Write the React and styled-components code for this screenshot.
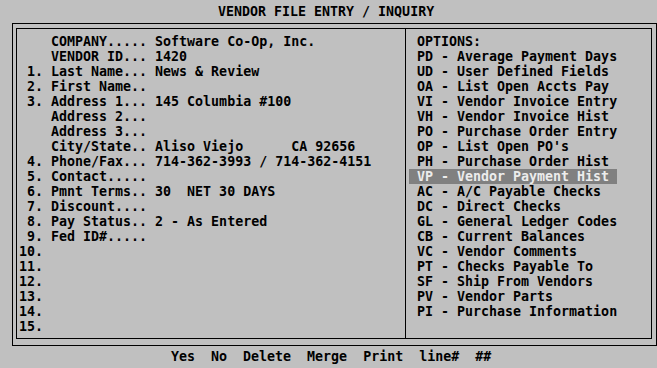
import React from 'react';
import styled, { createGlobalStyle } from 'styled-components';

const Global = createGlobalStyle`
  html, body { margin: 0; padding: 0; background: #c0c0c0; }
  body {
    font-family: "DejaVu Sans Mono", "Liberation Mono", monospace;
    font-weight: bold;
    font-size: 13.3px;
    line-height: 15px;
    color: #000;
  }
`;

const Screen = styled.div`
  width: 657px;
  height: 368px;
  display: flex;
  flex-direction: column;
  background: #c0c0c0;
  overflow: hidden;
`;

const Title = styled.div`
  padding: 4px 0 0 218px;
  height: 15px;
  white-space: pre;
`;

const OuterFrame = styled.div`
  margin: 4px 0 0 12px;
  width: 636px;
  border: 1px solid #000;
  padding: 4px 4px 6px 3px;
`;

const InnerFrame = styled.div`
  border: 1px solid #000;
  height: 309px;
  display: grid;
  grid-template-columns: 389px 1fr;
`;

const FieldPanel = styled.div`
  border-right: 1px solid #000;
  padding: 5px 0 0 2px;
`;

const Field = styled.div`
  display: flex;
  height: 15px;
  white-space: pre;
`;

const Num = styled.span`
  width: 3ch;
  margin-right: 1ch;
  text-align: right;
`;

const Label = styled.span`
  width: 13ch;
`;

const Value = styled.span``;

const OptionPanel = styled.div`
  padding: 5px 0 0 3px;
`;

const Option = styled.div`
  height: 15px;
  width: fit-content;
  padding: 0 8px 0 8px;
  white-space: pre;
  background: ${p => (p.$active ? '#808080' : 'transparent')};
  color: ${p => (p.$active ? '#ececec' : '#000')};
`;

const Footer = styled.div`
  padding: 3px 0 0 171px;
  white-space: pre;
`;

const fields = [
  ['', 'COMPANY.....', 'Software Co-Op, Inc.'],
  ['', 'VENDOR ID...', '1420'],
  ['1.', 'Last Name...', 'News & Review'],
  ['2.', 'First Name..', ''],
  ['3.', 'Address 1...', '145 Columbia #100'],
  ['', 'Address 2...', ''],
  ['', 'Address 3...', ''],
  ['', 'City/State..', 'Aliso Viejo      CA 92656'],
  ['4.', 'Phone/Fax...', '714-362-3993 / 714-362-4151'],
  ['5.', 'Contact.....', ''],
  ['6.', 'Pmnt Terms..', '30  NET 30 DAYS'],
  ['7.', 'Discount....', ''],
  ['8.', 'Pay Status..', '2 - As Entered'],
  ['9.', 'Fed ID#.....', ''],
  ['10.', '', ''],
  ['11.', '', ''],
  ['12.', '', ''],
  ['13.', '', ''],
  ['14.', '', ''],
  ['15.', '', ''],
];

const options = [
  ['PD', 'Average Payment Days'],
  ['UD', 'User Defined Fields'],
  ['OA', 'List Open Accts Pay'],
  ['VI', 'Vendor Invoice Entry'],
  ['VH', 'Vendor Invoice Hist'],
  ['PO', 'Purchase Order Entry'],
  ['OP', "List Open PO's"],
  ['PH', 'Purchase Order Hist'],
  ['VP', 'Vendor Payment Hist'],
  ['AC', 'A/C Payable Checks'],
  ['DC', 'Direct Checks'],
  ['GL', 'General Ledger Codes'],
  ['CB', 'Current Balances'],
  ['VC', 'Vendor Comments'],
  ['PT', 'Checks Payable To'],
  ['SF', 'Ship From Vendors'],
  ['PV', 'Vendor Parts'],
  ['PI', 'Purchase Information'],
];

export default function App() {
  return (
    <>
      <Global />
      <Screen>
        <Title>VENDOR FILE ENTRY / INQUIRY</Title>
        <OuterFrame>
          <InnerFrame>
            <FieldPanel>
              {fields.map(([n, l, v], i) => (
                <Field key={i}>
                  <Num>{n}</Num>
                  <Label>{l}</Label>
                  <Value>{v}</Value>
                </Field>
              ))}
            </FieldPanel>
            <OptionPanel>
              <Option>OPTIONS:</Option>
              {options.map(([c, t]) => (
                <Option key={c} $active={c === 'VP'}>{`${c} - ${t}`}</Option>
              ))}
            </OptionPanel>
          </InnerFrame>
        </OuterFrame>
        <Footer>{'Yes  No  Delete  Merge  Print  line#  ##'}</Footer>
      </Screen>
    </>
  );
}
